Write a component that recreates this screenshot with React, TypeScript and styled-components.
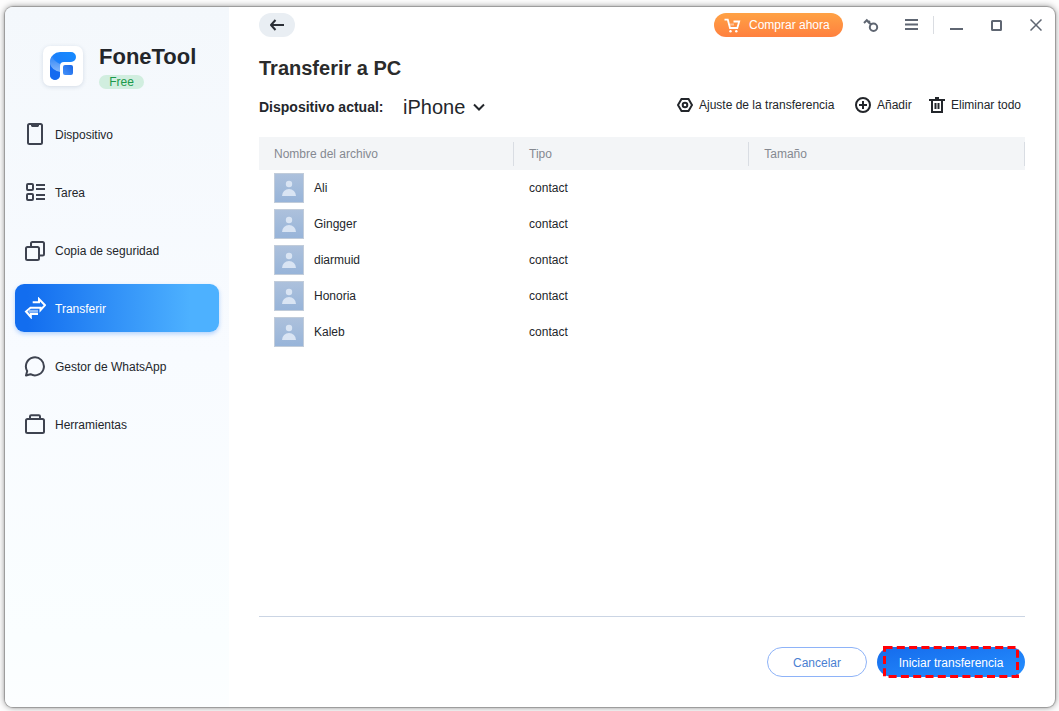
import React from 'react';
import styled, { createGlobalStyle, css } from 'styled-components';

const GlobalStyle = createGlobalStyle`
  *, *::before, *::after { box-sizing: border-box; }
  html { background: #fff; }
  body {
    margin: 0;
    background: #fdfdfd;
    color: #23262b;
    font: 12px/16px "Liberation Sans", Arial, sans-serif;
  }
  button, select { font: inherit; color: inherit; }
`;

const Desktop = styled.div`
  display: grid;
  min-height: 100vh;
  padding: 7px 4px 4px 5px;
`;

const AppWindow = styled.div`
  display: grid;
  grid-template-columns: 224px minmax(0, 1fr);
  overflow: hidden;
  border-radius: 8px;
  background: #fff;
  box-shadow: 0 0 1px 1px rgba(0, 0, 0, 0.25), 0 0 6px 1px rgba(0, 0, 0, 0.36);
`;

const Sidebar = styled.aside`
  padding: 37px 10px 20px;
  background: linear-gradient(180deg, #f4f8fc 0%, #f8fbff 50%, #fafeff 90%, #fcfeff 100%);
`;

const Brand = styled.div`
  display: flex;
  gap: 16px;
  padding-left: 28px;
`;

const LogoTile = styled.div`
  display: grid;
  place-items: center;
  width: 40px;
  height: 40px;
  margin-top: 2px;
  border-radius: 7px;
  background: #fff;
  box-shadow: 0 1px 4px rgba(40, 70, 110, 0.16);
`;

const BrandName = styled.div`
  font-size: 22px;
  font-weight: 700;
  line-height: 26px;
`;

const PlanBadge = styled.span`
  display: block;
  width: 45px;
  margin-top: 5px;
  border-radius: 7px;
  background: #d1eedf;
  color: #1b9a4b;
  line-height: 14px;
  text-align: center;
`;

const Nav = styled.nav`
  display: grid;
  gap: 10px;
  margin-top: 21px;
`;

const NavLink = styled.a<{ $active?: boolean }>`
  display: flex;
  align-items: center;
  gap: 9px;
  height: 48px;
  padding-left: 9px;
  border-radius: 9px;
  color: #23262b;
  text-decoration: none;
  ${(p) =>
    p.$active &&
    css`
      background: linear-gradient(90deg, #126def 6%, #4db1ff 86%);
      box-shadow: 0 2px 4px rgba(60, 140, 250, 0.36);
      color: #fff;
    `}
`;

const NavLabel = styled.span`
  padding-top: 2px;
`;

const Main = styled.main`
  display: flex;
  flex-direction: column;
  min-width: 0;
`;

const TitleBar = styled.header`
  display: flex;
  align-items: center;
  gap: 8px;
  padding: 6px 3px 0 30px;
`;

const BackButton = styled.button`
  display: grid;
  place-items: center;
  width: 36px;
  height: 24px;
  margin-right: auto;
  padding: 0;
  border: 0;
  border-radius: 12px;
  background: #e9eef3;
`;

const BuyButton = styled.button`
  display: flex;
  align-items: center;
  gap: 8px;
  width: 129px;
  height: 24px;
  margin-right: 4px;
  padding: 0 0 0 10px;
  border: 0;
  border-radius: 12px;
  background: linear-gradient(180deg, #ffa245, #ff803f);
  color: #fff;
  white-space: nowrap;
`;

const IconButton = styled.button`
  display: grid;
  place-items: center;
  width: 32px;
  height: 24px;
  padding: 0;
  border: 0;
  background: none;
  color: #5f6672;
`;

const BarDivider = styled.span`
  width: 1px;
  height: 18px;
  margin: 0 -2px;
  background: #dadde2;
`;

const Content = styled.section`
  display: flex;
  flex: 1;
  flex-direction: column;
  padding: 19px 30px 30px;
`;

const Title = styled.h1`
  margin: 0;
  color: #2b2b2b;
  font-size: 20px;
  line-height: 24px;
`;

const Toolbar = styled.div`
  display: flex;
  align-items: flex-end;
  justify-content: space-between;
  margin: 15px 0 18px;
`;

const DeviceField = styled.div`
  display: flex;
  align-items: center;
  gap: 16px;
`;

const DeviceLabel = styled.label`
  min-width: 128px;
  font-size: 14px;
  font-weight: 700;
`;

const SelectBox = styled.div`
  display: grid;
  align-items: center;
  > * { grid-area: 1 / 1; }
  svg { justify-self: end; pointer-events: none; }
`;

const DeviceSelect = styled.select`
  width: 82px;
  height: 24px;
  padding: 0;
  border: 0;
  appearance: none;
  background: none;
  font-size: 20px;
  line-height: 24px;
`;

const Actions = styled.div`
  display: flex;
  gap: 17px;
  padding-bottom: 6px;
`;

const ActionButton = styled.button<{ $width: number }>`
  display: flex;
  align-items: center;
  gap: 6px;
  min-width: ${(p) => p.$width}px;
  padding: 0;
  border: 0;
  background: none;
  white-space: nowrap;
`;

const FileTable = styled.table`
  width: 100%;
  border-collapse: collapse;
  table-layout: fixed;
`;

const HeadCell = styled.th<{ $width?: string }>`
  width: ${(p) => p.$width ?? 'auto'};
  height: 33px;
  padding: 0;
  background: #f3f5f7;
  color: #858991;
  font-weight: 400;
  text-align: left;
`;

const HeadLabel = styled.div`
  padding-left: 15px;
  border-right: 1px solid #d9dde3;
  line-height: 24px;
`;

const Cell = styled.td`
  height: 36px;
  padding: 0 15px;
`;

const FileName = styled.div`
  display: flex;
  align-items: center;
  gap: 10px;
`;

const Footer = styled.footer`
  display: flex;
  justify-content: flex-end;
  gap: 10px;
  margin-top: auto;
  padding-top: 30px;
  border-top: 1px solid #cbd5e4;
`;

const FooterButton = styled.button<{ $primary?: boolean }>`
  position: relative;
  width: ${(p) => (p.$primary ? '148px' : '100px')};
  height: 30px;
  padding: 2px 0 0;
  border: ${(p) => (p.$primary ? '0' : '1px solid #8eb3f8')};
  border-radius: 15px;
  background: ${(p) => (p.$primary ? 'linear-gradient(170deg, #156bec, #2690ff)' : '#fff')};
  color: ${(p) => (p.$primary ? '#fff' : '#4a7fd2')};
`;

const Highlight = styled.svg`
  position: absolute;
  top: -1px;
  left: 6px;
`;

const Logo = () => (
  <svg width="28" height="30" viewBox="0 0 28 30" aria-hidden="true">
    <defs>
      <linearGradient id="logoTop" x1="0" y1="1" x2="1" y2="0">
        <stop offset="0" stopColor="#5d9ff6" />
        <stop offset=".5" stopColor="#1a80fb" />
        <stop offset="1" stopColor="#168bff" />
      </linearGradient>
      <linearGradient id="logoStem" x1="0" y1="0" x2="0" y2="1">
        <stop offset="0" stopColor="#2f85f6" />
        <stop offset="1" stopColor="#86b7fa" />
      </linearGradient>
      <linearGradient id="logoDot" x1="0" y1="1" x2="1" y2="0">
        <stop offset="0" stopColor="#4693fa" />
        <stop offset="1" stopColor="#1765e6" />
      </linearGradient>
    </defs>
    <path d="M11 1h11a5 5 0 0 1 0 10h-7a4 4 0 0 0-4 4v9a5 5 0 0 1-10 0V11A10 10 0 0 1 11 1z" fill="url(#logoTop)" />
    <path d="M1 11c0-2 .8-4 2-6 1 4 4 6 8 8v8C6 20 2 17 1 13z" fill="url(#logoStem)" />
    <path d="M1 13c1 4 5 7 10 8v3a5 5 0 0 1-10 0z" fill="#146af0" />
    <rect x="14" y="14" width="10" height="10" rx="2" fill="url(#logoDot)" />
  </svg>
);

const stroke = { fill: 'none', stroke: '#3e4350', strokeWidth: 2 } as const;

const navIcons = {
  device: (
    <>
      <rect x="4" y="1" width="14" height="20" rx="1.5" {...stroke} />
      <path d="M7 1h8v2l-1 1H8L7 3z" fill="#3e4350" />
    </>
  ),
  task: (
    <g {...stroke}>
      <rect x="3" y="3" width="6" height="6" rx="1" />
      <rect x="3" y="13" width="6" height="6" rx="1" />
      <path d="M12 4h9M12 8h9M12 14h9M12 18h9" />
    </g>
  ),
  backup: (
    <g {...stroke}>
      <rect x="2" y="8" width="13" height="13" rx="1.5" />
      <path d="M7 8V4.500Q7 3 8.500 3H18.500Q20 3 20 4.500V15Q20 16.500 18.500 16.500H15" />
    </g>
  ),
  transfer: (
    <g fill="none" stroke="#fff" strokeWidth="2">
      <path d="M8.700 5.300H15V2l6 6.200-4.500 5V10.700H6.500L2 14.500 6.800 20V17H14" />
      <path d="M4.500 14.300H14" stroke="#8fbcfb" strokeWidth="3" />
    </g>
  ),
  chat: <path d="M2 20.500 3.200 16A9 9 0 1 1 6.500 19.200z" {...stroke} strokeLinejoin="round" />,
  tools: (
    <g {...stroke}>
      <rect x="2" y="6" width="18" height="14" rx="1.500" />
      <path d="M6 6V3.500Q6 2.300 7.200 2.300h7.600Q16 2.300 16 3.500V6" />
    </g>
  ),
};

const navItems: { id: keyof typeof navIcons; label: string }[] = [
  { id: 'device', label: 'Dispositivo' },
  { id: 'task', label: 'Tarea' },
  { id: 'backup', label: 'Copia de seguridad' },
  { id: 'transfer', label: 'Transferir' },
  { id: 'chat', label: 'Gestor de WhatsApp' },
  { id: 'tools', label: 'Herramientas' },
];

const Avatar = () => (
  <svg width="30" height="30" viewBox="0 0 30 30" aria-hidden="true">
    <defs>
      <linearGradient id="avatarFill" x1="0" y1="0" x2="0" y2="1">
        <stop offset="0" stopColor="#adc1dc" />
        <stop offset="1" stopColor="#97b4d9" />
      </linearGradient>
    </defs>
    <rect x=".5" y=".5" width="29" height="29" fill="url(#avatarFill)" stroke="#c1ccda" />
    <circle cx="15" cy="11" r="3.200" fill="#d9e4f3" />
    <path d="M8 23a7 7 0 0 1 14 0z" fill="#d9e4f3" />
  </svg>
);

const contacts = ['Ali', 'Gingger', 'diarmuid', 'Honoria', 'Kaleb'];

export default function App() {
  return (
    <>
      <GlobalStyle />
      <Desktop>
        <AppWindow>
          <Sidebar>
            <Brand>
              <LogoTile><Logo /></LogoTile>
              <div>
                <BrandName>FoneTool</BrandName>
                <PlanBadge>Free</PlanBadge>
              </div>
            </Brand>
            <Nav>
              {navItems.map(({ id, label }) => (
                <NavLink key={id} href={`#${id}`} $active={id === 'transfer'}>
                  <svg width="22" height="22" viewBox="0 0 22 22" aria-hidden="true">{navIcons[id]}</svg>
                  <NavLabel>{label}</NavLabel>
                </NavLink>
              ))}
            </Nav>
          </Sidebar>
          <Main>
            <TitleBar>
              <BackButton aria-label="Atrás">
                <svg width="16" height="14" viewBox="0 0 16 14" fill="none" stroke="#2b2f36" strokeWidth="2" strokeLinejoin="round">
                  <path d="M15 7H2M6.500 2 2 7l4.500 5" />
                </svg>
              </BackButton>
              <BuyButton>
                <svg width="17" height="16" viewBox="0 0 17 16" fill="none" stroke="#fff" strokeWidth="1.800">
                  <path d="M.5 2.700H3.800L6 11h7.300L15.200 4.500H9.500" />
                  <path d="M6 7.500h4" opacity=".45" />
                  <circle cx="6.500" cy="14.200" r="1.200" fill="#fff" stroke="none" />
                  <circle cx="12.300" cy="14.200" r="1.200" fill="#fff" stroke="none" />
                </svg>
                Comprar ahora
              </BuyButton>
              <IconButton aria-label="Licencia">
                <svg width="16" height="14" viewBox="0 0 16 14" fill="none" stroke="currentColor" strokeWidth="2">
                  <circle cx="10.500" cy="9.200" r="3.700" />
                  <path d="M8 6.500 3.800 2.200 1 5M6.800 2.800 4.800 5" />
                </svg>
              </IconButton>
              <IconButton aria-label="Menú">
                <svg width="14" height="12" viewBox="0 0 14 12" stroke="currentColor" strokeWidth="2">
                  <path d="M1 1h13M1 5.500h13M1 10h13" />
                </svg>
              </IconButton>
              <BarDivider />
              <IconButton aria-label="Minimizar">
                <svg width="14" height="14" viewBox="0 0 14 14" stroke="currentColor" strokeWidth="2">
                  <path d="M1 11h13" />
                </svg>
              </IconButton>
              <IconButton aria-label="Maximizar">
                <svg width="12" height="12" viewBox="0 0 12 12" fill="none" stroke="currentColor" strokeWidth="2">
                  <rect x="2" y="2" width="9" height="9" rx=".5" />
                </svg>
              </IconButton>
              <IconButton aria-label="Cerrar">
                <svg width="12" height="12" viewBox="0 0 12 12" stroke="currentColor" strokeWidth="1.500">
                  <path d="m.5.5 11 11M11.500.5l-11 11" />
                </svg>
              </IconButton>
            </TitleBar>
            <Content>
              <Title>Transferir a PC</Title>
              <Toolbar>
                <DeviceField>
                  <DeviceLabel htmlFor="device">Dispositivo actual:</DeviceLabel>
                  <SelectBox>
                    <DeviceSelect id="device"><option>iPhone</option></DeviceSelect>
                    <svg width="12" height="8" viewBox="0 0 12 8" fill="none" stroke="#23262b" strokeWidth="2">
                      <path d="m1 1.500 5 5 5-5" />
                    </svg>
                  </SelectBox>
                </DeviceField>
                <Actions>
                  <ActionButton $width={161}>
                    <svg width="16" height="16" viewBox="0 0 16 16" fill="none" stroke="#23262b" strokeWidth="2">
                      <path d="M4.500 2h7L15 8l-3.500 6h-7L1 8z" />
                      <circle cx="8" cy="8" r="2.300" />
                    </svg>
                    Ajuste de la transferencia
                  </ActionButton>
                  <ActionButton $width={57}>
                    <svg width="16" height="16" viewBox="0 0 16 16" fill="none" stroke="#23262b" strokeWidth="2">
                      <circle cx="8" cy="8" r="7" />
                      <path d="M8 4v8M4 8h8" />
                    </svg>
                    Añadir
                  </ActionButton>
                  <ActionButton $width={96}>
                    <svg width="16" height="16" viewBox="0 0 16 16" fill="none" stroke="#23262b" strokeWidth="2">
                      <path d="M0 3h16M3 3v12h10V3M6.500 6v6M9.500 6v6M6 1h4" />
                    </svg>
                    Eliminar todo
                  </ActionButton>
                </Actions>
              </Toolbar>
              <FileTable>
                <thead>
                  <tr>
                    <HeadCell $width="33.3%"><HeadLabel>Nombre del archivo</HeadLabel></HeadCell>
                    <HeadCell $width="30.7%"><HeadLabel>Tipo</HeadLabel></HeadCell>
                    <HeadCell><HeadLabel>Tamaño</HeadLabel></HeadCell>
                  </tr>
                </thead>
                <tbody>
                  {contacts.map((name) => (
                    <tr key={name}>
                      <Cell><FileName><Avatar />{name}</FileName></Cell>
                      <Cell>contact</Cell>
                      <Cell />
                    </tr>
                  ))}
                </tbody>
              </FileTable>
              <Footer>
                <FooterButton>Cancelar</FooterButton>
                <FooterButton $primary>
                  Iniciar transferencia
                  <Highlight width="136" height="32" viewBox="0 0 136 32" aria-hidden="true">
                    <rect x="1.500" y="1.500" width="133" height="29" fill="none" stroke="#ff0008" strokeWidth="3" strokeDasharray="8 4.300" />
                  </Highlight>
                </FooterButton>
              </Footer>
            </Content>
          </Main>
        </AppWindow>
      </Desktop>
    </>
  );
}
